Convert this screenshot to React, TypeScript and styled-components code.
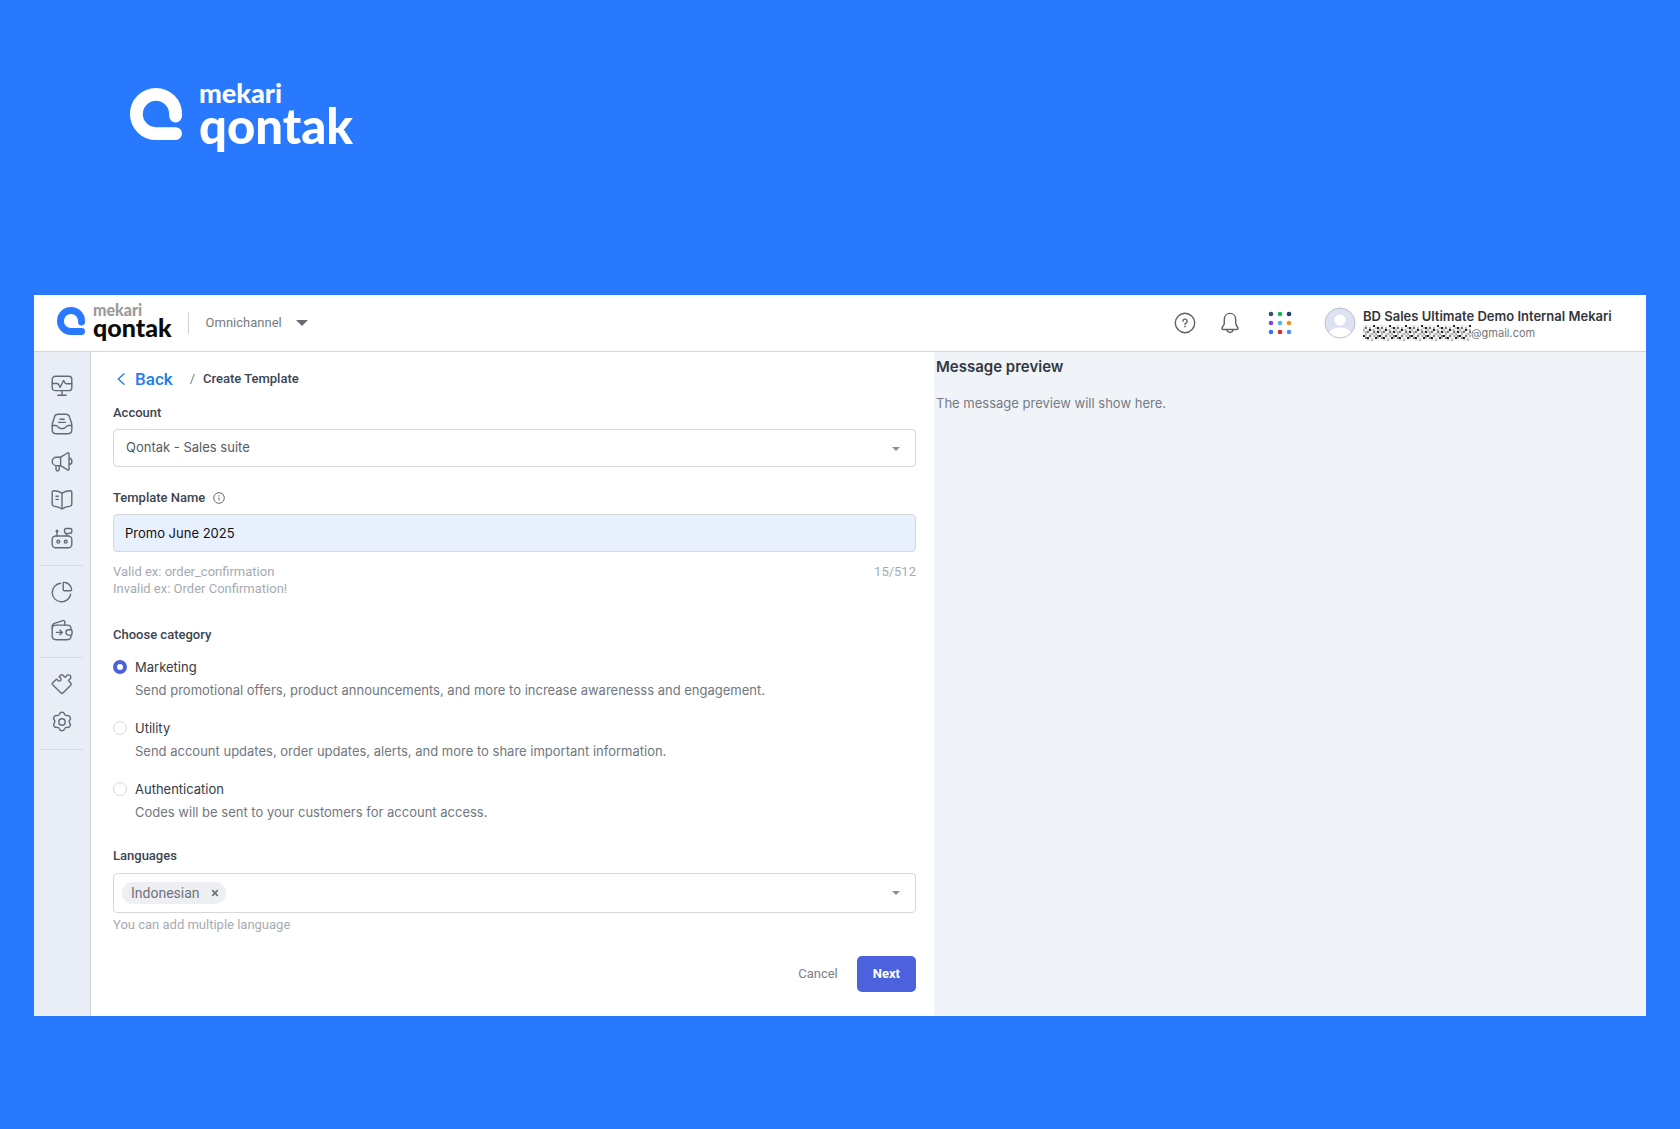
import React, { useState } from "react";
import styled, { createGlobalStyle, css } from "styled-components";

const roboto = `Roboto, "Liberation Sans", sans-serif`;
const inter = `Inter, "Liberation Sans", sans-serif`;
const lato = `Lato, "Liberation Sans", sans-serif`;

const GlobalStyle = createGlobalStyle`
  *, *::before, *::after { box-sizing: border-box; }
  body { margin: 0; background: #2979ff; font-family: ${roboto}; font-size: 13px; line-height: 20px; color: #3b4453; }
  button, input, select { font: inherit; color: inherit; margin: 0; }
  button { padding: 0; border: 0; background: none; cursor: pointer; }
  h1, h2, p, fieldset, legend { margin: 0; padding: 0; border: 0; font: inherit; }
  a { color: inherit; text-decoration: none; }
  svg { display: block; flex: none; }
`;

/* ---------- page ---------- */

const Page = styled.div`
  min-height: 100vh;
  display: flex;
  flex-direction: column;
`;

const Banner = styled.header`
  padding: 82px 130px 149px;
`;

const AppWindow = styled.main`
  margin: 0 34px 113px;
  background: #fff;
`;

/* ---------- brand ---------- */

type BrandSize = "large" | "small";

const BrandRow = styled.div<{ $size: BrandSize }>`
  display: flex;
  align-items: center;
  gap: ${(p) => (p.$size === "large" ? 17 : 8)}px;
  color: ${(p) => (p.$size === "large" ? "#fff" : "#2979ff")};
  ${(p) => p.$size === "small" && css`padding-bottom: 4px;`}
`;

const BrandText = styled.div`
  display: flex;
  flex-direction: column;
  font-family: ${lato};
  font-weight: 900;
`;

const BrandTop = styled.span<{ $size: BrandSize }>`
  ${(p) =>
    p.$size === "large"
      ? css`font-size: 27px; line-height: 22px; color: #fff;`
      : css`font-size: 16px; line-height: 12px; color: #9b9b9b;`}
`;

const BrandBottom = styled.span<{ $size: BrandSize }>`
  ${(p) =>
    p.$size === "large"
      ? css`font-size: 49px; line-height: 42px; color: #fff;`
      : css`font-size: 25px; line-height: 23px; color: #0b0b0b;`}
`;

function Brand({ size }: { size: BrandSize }) {
  const px = size === "large" ? 52 : 28;
  return (
    <BrandRow $size={size}>
      <svg width={px} height={px} viewBox="0 0 154 154" fill="none" stroke="currentColor" strokeWidth="38" strokeLinecap="round" strokeLinejoin="round" aria-hidden="true">
        <path d="M135 83V77A58 58 0 1 0 77 135H135" />
      </svg>
      <BrandText>
        <BrandTop $size={size}>mekari</BrandTop>
        <BrandBottom $size={size}>qontak</BrandBottom>
      </BrandText>
    </BrandRow>
  );
}

/* ---------- top bar ---------- */

const TopBar = styled.header`
  display: flex;
  align-items: center;
  height: 57px;
  padding: 0 29px 0 23px;
  border-bottom: 1px solid #d3d8dd;
`;

const TopDivider = styled.span`
  width: 1px;
  height: 22px;
  margin: 0 17px 0 16px;
  background: #cfd3d8;
`;

const ProductButton = styled.button`
  display: flex;
  align-items: center;
  gap: 14px;
  color: #757b84;
`;

const TopActions = styled.div`
  display: flex;
  align-items: center;
  margin-left: auto;
  color: #5e6165;
`;

const IconButton = styled.button<{ $after?: number }>`
  display: flex;
  margin-right: ${(p) => p.$after ?? 0}px;
  color: inherit;
`;

const Profile = styled.button`
  display: flex;
  align-items: center;
  gap: 7px;
  text-align: left;
  font-family: ${inter};
`;

const ProfileText = styled.span`
  display: flex;
  flex-direction: column;
  min-width: 254px;
  padding-top: 1px;
`;

const ProfileName = styled.span`
  font-size: 13px;
  font-weight: 600;
  line-height: 18px;
  color: #33363c;
`;

const ProfileMail = styled.span`
  display: flex;
  align-items: center;
  font-size: 11px;
  line-height: 16px;
  color: #74777d;
`;

const appDots = ["#34506b", "#12b85a", "#1d3c7c", "#7a4ae0", "#4fb9e6", "#f39313", "#2c74f0", "#e5252f", "#4b8df8"];

function AppsIcon() {
  return (
    <svg width="24" height="24" viewBox="0 0 24 24" aria-hidden="true">
      {appDots.map((c, i) => (
        <circle key={c} cx={3 + (i % 3) * 9} cy={3 + Math.floor(i / 3) * 9} r="2.3" fill={c} />
      ))}
    </svg>
  );
}

function HelpIcon() {
  return (
    <svg width="22" height="22" viewBox="0 0 22 22" fill="none" stroke="currentColor" strokeWidth="1.4" strokeLinecap="round" aria-hidden="true">
      <circle cx="11" cy="11" r="9.7" />
      <path d="M8.9 9.2a2.1 2.1 0 1 1 3.1 1.900c-.7.4-1 .7-1 1.400" />
      <circle cx="11" cy="14.700" r=".5" fill="currentColor" strokeWidth=".6" />
    </svg>
  );
}

function BellIcon() {
  return (
    <svg width="22" height="22" viewBox="0 0 22 22" fill="none" stroke="currentColor" strokeWidth="1.4" strokeLinejoin="round" aria-hidden="true">
      <path d="M11 1.4c-3.400 0-5.700 2.6-5.700 6v3.600c0 1-.3 1.700-.8 2.500l-1.300 2c-.6 1-.1 2 1 2h13.600c1.100 0 1.600-1 1-2l-1.300-2c-.5-.8-.8-1.500-.8-2.500V7.400c0-3.400-2.300-6-5.700-6Z" />
      <path d="M7.800 17.500c.3 1.800 1.500 3 3.200 3s2.900-1.200 3.200-3" />
    </svg>
  );
}

function AvatarIcon() {
  return (
    <svg width="32" height="32" viewBox="0 0 32 32" aria-hidden="true">
      <defs>
        <clipPath id="avatar"><circle cx="16" cy="16" r="15" /></clipPath>
      </defs>
      <g clipPath="url(#avatar)">
        <rect width="32" height="32" fill="#dde2f3" />
        <circle cx="16" cy="13" r="5.600" fill="#fff" />
        <ellipse cx="16" cy="28.500" rx="12" ry="8" fill="#fff" />
      </g>
      <circle cx="16" cy="16" r="15" fill="none" stroke="#bcc2cf" />
    </svg>
  );
}

const mosaicTile = [
  "01000400",
  "13020024",
  "20141201",
  "12300314",
  "02012120",
  "41030213",
  "03401042",
  "00102000",
];
const mosaicShades = ["#f6f6f6", "#dcdcdc", "#b9b9b9", "#777777", "#222222"];

function MaskedName() {
  return (
    <svg width="108" height="16" viewBox="0 0 54 8" shapeRendering="crispEdges" role="img" aria-label="Hidden address">
      {mosaicTile.flatMap((row, y) =>
        Array.from({ length: 54 }, (_, x) => (
          <rect key={`${x}-${y}`} x={x} y={y} width="1" height="1" fill={mosaicShades[Number(row[x % 8])]} />
        ))
      )}
    </svg>
  );
}

function Caret({ width, color }: { width: number; color: string }) {
  return (
    <svg width={width} height={width / 2} viewBox="0 0 12 6" fill={color} aria-hidden="true">
      <path d="M0 0h12L6 6Z" />
    </svg>
  );
}

/* ---------- body ---------- */

const Body = styled.div`
  display: grid;
  grid-template-columns: 57px minmax(0, 843fr) minmax(0, 712fr);
`;

const SideNav = styled.nav`
  padding: 8px 7px 0 6px;
  background: #e9edf5;
  border-right: 1px solid #cdd3dc;
`;

const NavGroup = styled.div`
  display: flex;
  flex-direction: column;
  align-items: center;
  gap: 16px;
  padding: 15px 0 16px;
  border-bottom: 1px solid #d5dae4;
  color: #646a75;
`;

const NavLink = styled.a`
  display: flex;
`;

const navIcons: Record<string, React.ReactNode> = {
  Dashboard: (
    <>
      <rect x="1.200" y="1.200" width="19.600" height="14.400" rx="3.200" />
      <path d="M1.200 8.500h4.600c1 0 1.500.4 1.900 1.100l1.500 2.700L12.500 5.500l1.700 2.600c.3.400.7.600 1.300.6h5.300M11 15.600v4.600M6.800 20.300h8.400" />
    </>
  ),
  Inbox: (
    <>
      <path d="M7 1.300h8c1.700 0 2.900.8 3.400 2.300l2 6.100c.3 1 .4 1.700.4 2.700v4.300c0 2.400-1.600 4-4 4H5.200c-2.400 0-4-1.600-4-4v-4.300c0-1 .1-1.700.4-2.700l2-6.100C4.100 2.100 5.300 1.300 7 1.300Z" />
      <path d="M9 6.300h4.200M7.600 9.400h6.900M1.300 12.500h3.400c1 0 1.500.4 2 1.200.8 1.400 1.700 2 4.300 2s3.500-.6 4.300-2c.5-.8 1-1.200 2-1.200h3.400" />
    </>
  ),
  Broadcast: (
    <>
      <path d="M9.600 6.200H5.400a4.200 4.200 0 0 0 0 8.400h4.200Z" />
      <path d="m9.600 6.200 7-4.200c.8-.5 1.400-.1 1.400.8v15.200c0 .9-.6 1.300-1.400.8l-7-4.200M18 7.300c1.800 0 2.900 1.300 2.900 3.100S19.800 13.500 18 13.500M5 14.600v3.700c0 1.100.6 1.700 1.600 1.700s1.600-.6 1.600-1.700v-3.700" />
    </>
  ),
  Contacts: (
    <>
      <path d="M11 4.100C9 2.800 6.600 2 3.300 1.700c-1.300-.1-2.100.6-2.100 1.900v11.600c0 1.100.6 1.700 1.700 1.900 3 .4 5.700 1.300 8.100 2.900 2.400-1.600 5.100-2.500 8.100-2.900 1.100-.2 1.700-.8 1.700-1.900V3.600c0-1.300-.8-2-2.100-1.900C15.400 2 13 2.800 11 4.100ZM11 4.100V20" />
      <path d="M5 7.300h2.200M5 10.400h2.200" />
    </>
  ),
  Chatbot: (
    <>
      <rect x="1.200" y="9" width="19.600" height="11.800" rx="3.600" />
      <circle cx="7.300" cy="14.700" r="1.400" />
      <circle cx="14.700" cy="14.700" r="1.400" />
      <path d="M6 9V4.800" />
      <circle cx="6" cy="3.900" r=".8" />
      <path d="M15 1.500h4.300c1 0 1.500.5 1.500 1.500v1.800c0 1-.5 1.500-1.500 1.500h-1.700l-2.300 1.600V6.300c-1.100 0-1.800-.5-1.800-1.500V3c0-1 .5-1.500 1.500-1.500Z" />
    </>
  ),
  Reports: (
    <>
      <path d="M9.500 2.300a9.300 9.300 0 1 0 10.200 10.900" />
      <path d="M12.200 2.200c0-.7.400-1.100 1.100-1 3.800.3 6.900 3.400 7.300 7.300.1.700-.4 1.200-1.100 1.200h-6.100c-.8 0-1.200-.4-1.200-1.200Z" />
    </>
  ),
  Billing: (
    <>
      <path d="M20 10.500v-.8c0-2.400-1.200-3.600-3.600-3.600H5.200c-2.500 0-4 1.300-4 3.700v7c0 2.500 1.400 3.900 3.900 3.900h11.300c2.400 0 3.600-1.200 3.600-3.600v-.8" />
      <path d="M1.200 9V7.600c0-1.900 1-3 2.900-3.500l7.700-2.500c1.200-.4 2 .2 2 1.400v3.100M17.600 10.700H20c.7 0 1 .4 1 1v3.400c0 .6-.3 1-1 1h-2.400c-1.600 0-2.700-1.100-2.700-2.700s1.100-2.700 2.700-2.700ZM5.400 13.400H11M9 11.200l2.300 2.200L9 15.600" />
    </>
  ),
  Integrations: (
    <path d="M1.700 9.800 4.900 6.700c.6-.6 1.200-.5 1.600.3.600 1.300 2.100 1.500 3 .6.900-.9.700-2.400-.5-3-.8-.4-.9-1-.3-1.600l.8-.8c.8-.8 1.600-.8 2.400 0l1.600 1.600c.7.700 1.300.5 1.600-.3.600-1.700 2.700-2.200 4-1s.9 3.400-.8 4.100c-.8.300-1 .9-.3 1.600l1.700 1.700c.8.800.8 1.500 0 2.300l-7.500 7.600c-.8.800-1.600.8-2.400 0l-8.100-8c-.7-.7-.7-1.300 0-2Z" />
  ),
  Settings: (
    <>
      <circle cx="11" cy="11" r="3.200" />
      <path d="M8.400 3.100c.5-1.300 1.100-1.900 2.600-1.900s2.100.6 2.600 1.900c.4 1.200 1.300 1.700 2.500 1.500 1.400-.3 2.200 0 2.900 1.200.8 1.300.6 2.100-.3 3.200-.8.900-.8 2.100 0 3 .9 1.100 1.100 1.900.3 3.200-.7 1.200-1.500 1.500-2.900 1.200-1.200-.2-2.100.3-2.500 1.500-.5 1.300-1.100 1.900-2.600 1.900s-2.100-.6-2.600-1.900c-.4-1.200-1.300-1.700-2.500-1.500-1.400.3-2.200 0-2.900-1.200-.8-1.300-.6-2.100.3-3.200.8-.9.800-2.100 0-3C2.400 7.900 2.200 7.100 3 5.800c.7-1.200 1.500-1.500 2.900-1.200 1.200.2 2.100-.3 2.500-1.500Z" />
    </>
  ),
};

const navGroups = [
  ["Dashboard", "Inbox", "Broadcast", "Contacts", "Chatbot"],
  ["Reports", "Billing"],
  ["Integrations", "Settings"],
];

/* ---------- form ---------- */

const Form = styled.form`
  display: flex;
  flex-direction: column;
  padding: 15px 18px 24px 22px;
`;

const Crumbs = styled.nav`
  display: flex;
  align-items: center;
  height: 24px;
  margin-bottom: 12px;
`;

const BackLink = styled.a`
  display: flex;
  align-items: center;
  gap: 10px;
  padding-left: 4px;
  color: #1f7be8;
  font-size: 17px;
  font-weight: 500;
`;

const CrumbSlash = styled.span`
  margin: 0 8px 0 17px;
  color: #757b84;
`;

const CrumbTitle = styled.h1`
  font-weight: 500;
`;

const Field = styled.div<{ $after?: number }>`
  display: flex;
  flex-direction: column;
  gap: 6px;
  margin-bottom: ${(p) => p.$after ?? 0}px;
`;

const LabelRow = styled.div`
  display: flex;
  align-items: center;
  gap: 8px;
`;

const Label = styled.label`
  font-weight: 500;
`;

const boxed = css`
  width: 100%;
  border: 1px solid #d3d8dd;
  border-radius: 4px;
  background: #fff;
`;

const SelectWrap = styled.div`
  display: grid;
  align-items: center;
  > * { grid-area: 1 / 1; }
  > svg { justify-self: end; margin: 2px 16px 0 0; pointer-events: none; }
`;

const Select = styled.select`
  ${boxed}
  height: 38px;
  padding: 0 12px 2px;
  appearance: none;
  font-family: ${inter};
  font-size: 13px;
  color: #545b68;
`;

const TextInput = styled.input`
  ${boxed}
  height: 38px;
  padding: 0 11px;
  background: #e8f0fe;
  font-family: ${inter};
  font-size: 13px;
  color: #0f1115;
`;

const HelpRow = styled.div`
  display: flex;
  justify-content: space-between;
  padding-top: 5px;
`;

const Hint = styled.p`
  line-height: 17px;
  color: #a6abb1;
`;

const Category = styled.fieldset`
  display: flex;
  flex-direction: column;
  gap: 18px;
  margin-bottom: 24px;
`;

const Legend = styled.legend`
  margin-bottom: 12px;
  font-weight: 500;
`;

const Option = styled.div`
  display: grid;
  grid-template-columns: 14px minmax(0, 1fr);
  column-gap: 8px;
  row-gap: 3px;
  align-items: center;
  font-family: ${inter};
`;

const Radio = styled.input`
  appearance: none;
  width: 14px;
  height: 14px;
  margin: 0;
  border: 1px solid #d3d8dd;
  border-radius: 50%;
  background: #fff;
  &:checked { border: 4px solid #4b61dd; }
`;

const OptionLabel = styled.label`
  color: #353b45;
`;

const OptionText = styled.p`
  grid-column: 2;
  color: #717780;
`;

const TagBox = styled.div`
  ${boxed}
  display: flex;
  align-items: center;
  height: 40px;
  margin: 1px 0 -3px;
  padding: 0 15px 0 8px;
`;

const Tag = styled.span`
  display: flex;
  align-items: center;
  gap: 11px;
  height: 22px;
  padding: 0 7px 0 9px;
  border-radius: 11px;
  background: #edeff2;
  font-size: 14px;
  color: #6d737c;
`;

const TagInput = styled.input`
  flex: 1;
  min-width: 0;
  border: 0;
  outline: 0;
  background: none;
`;

const Actions = styled.div`
  display: flex;
  justify-content: flex-end;
  gap: 19px;
  margin-top: 23px;
`;

const CancelButton = styled.button`
  color: #7b7f86;
`;

const NextButton = styled.button`
  height: 36px;
  padding: 0 16px;
  border-radius: 5px;
  background: #4b61dd;
  color: #fff;
  font-weight: 700;
`;

/* ---------- preview ---------- */

const Preview = styled.aside`
  padding: 5px 2px;
  background: #f0f4f8;
  font-family: ${inter};
`;

const PreviewTitle = styled.h2`
  margin-bottom: 16px;
  font-size: 15px;
  font-weight: 600;
  color: #33373d;
`;

const PreviewText = styled.p`
  color: #757b84;
`;

const categories = [
  { name: "Marketing", text: "Send promotional offers, product announcements, and more to increase awarenesss and engagement." },
  { name: "Utility", text: "Send account updates, order updates, alerts, and more to share important information." },
  { name: "Authentication", text: "Codes will be sent to your customers for account access." },
];

export default function App() {
  const [category, setCategory] = useState("Marketing");
  const [name, setName] = useState("Promo June 2025");
  const [languages, setLanguages] = useState(["Indonesian"]);

  return (
    <>
      <GlobalStyle />
      <Page>
        <Banner>
          <Brand size="large" />
        </Banner>
        <AppWindow>
          <TopBar>
            <Brand size="small" />
            <TopDivider />
            <ProductButton type="button">
              Omnichannel
              <Caret width={12} color="#666b73" />
            </ProductButton>
            <TopActions>
              <IconButton type="button" aria-label="Help" $after={23}><HelpIcon /></IconButton>
              <IconButton type="button" aria-label="Notifications" $after={27}><BellIcon /></IconButton>
              <IconButton type="button" aria-label="Apps" $after={32}><AppsIcon /></IconButton>
              <Profile type="button">
                <AvatarIcon />
                <ProfileText>
                  <ProfileName>BD Sales Ultimate Demo Internal Mekari</ProfileName>
                  <ProfileMail><MaskedName />@gmail.com</ProfileMail>
                </ProfileText>
              </Profile>
            </TopActions>
          </TopBar>
          <Body>
            <SideNav aria-label="Main">
              {navGroups.map((group) => (
                <NavGroup key={group[0]}>
                  {group.map((item) => (
                    <NavLink key={item} href="#" aria-label={item}>
                      <svg width="22" height="22" viewBox="0 0 22 22" fill="none" stroke="currentColor" strokeWidth="1.400" strokeLinecap="round" strokeLinejoin="round" aria-hidden="true">
                        {navIcons[item]}
                      </svg>
                    </NavLink>
                  ))}
                </NavGroup>
              ))}
            </SideNav>
            <Form onSubmit={(e) => e.preventDefault()}>
              <Crumbs aria-label="Breadcrumb">
                <BackLink href="#">
                  <svg width="8" height="12" viewBox="0 0 8 12" fill="none" stroke="currentColor" strokeWidth="1.300" strokeLinecap="round" strokeLinejoin="round" aria-hidden="true">
                    <path d="M7 .8 1.200 6 7 11.200" />
                  </svg>
                  Back
                </BackLink>
                <CrumbSlash>/</CrumbSlash>
                <CrumbTitle>Create Template</CrumbTitle>
              </Crumbs>

              <Field $after={21}>
                <Label htmlFor="account">Account</Label>
                <SelectWrap>
                  <Select id="account">
                    <option>Qontak - Sales suite</option>
                  </Select>
                  <Caret width={8} color="#8b8f94" />
                </SelectWrap>
              </Field>

              <Field $after={28}>
                <LabelRow>
                  <Label htmlFor="template-name">Template Name</Label>
                  <svg width="12" height="12" viewBox="0 0 12 12" fill="none" stroke="#646a75" aria-hidden="true">
                    <circle cx="6" cy="6" r="5.300" />
                    <path d="M6 5.400v3.200M6 3.200v1.100" />
                  </svg>
                </LabelRow>
                <TextInput id="template-name" value={name} onChange={(e) => setName(e.target.value)} />
                <HelpRow>
                  <Hint>
                    Valid ex: order_confirmation
                    <br />
                    Invalid ex: Order Confirmation!
                  </Hint>
                  <Hint>{name.length}/512</Hint>
                </HelpRow>
              </Field>

              <Category>
                <Legend>Choose category</Legend>
                {categories.map((c) => (
                  <Option key={c.name}>
                    <Radio
                      type="radio"
                      name="category"
                      id={c.name}
                      checked={category === c.name}
                      onChange={() => setCategory(c.name)}
                    />
                    <OptionLabel htmlFor={c.name}>{c.name}</OptionLabel>
                    <OptionText>{c.text}</OptionText>
                  </Option>
                ))}
              </Category>

              <Field>
                <Label htmlFor="languages">Languages</Label>
                <TagBox>
                  {languages.map((l) => (
                    <Tag key={l}>
                      {l}
                      <IconButton type="button" aria-label={`Remove ${l}`} onClick={() => setLanguages(languages.filter((x) => x !== l))}>
                        <svg width="8" height="8" viewBox="0 0 8 8" stroke="currentColor" strokeWidth="1.700" aria-hidden="true">
                          <path d="m1.200 1.200 5.600 5.600M6.800 1.200 1.200 6.800" />
                        </svg>
                      </IconButton>
                    </Tag>
                  ))}
                  <TagInput id="languages" />
                  <Caret width={8} color="#8b8f94" />
                </TagBox>
                <Hint>You can add multiple language</Hint>
              </Field>

              <Actions>
                <CancelButton type="button">Cancel</CancelButton>
                <NextButton type="submit">Next</NextButton>
              </Actions>
            </Form>
            <Preview>
              <PreviewTitle>Message preview</PreviewTitle>
              <PreviewText>The message preview will show here.</PreviewText>
            </Preview>
          </Body>
        </AppWindow>
      </Page>
    </>
  );
}
